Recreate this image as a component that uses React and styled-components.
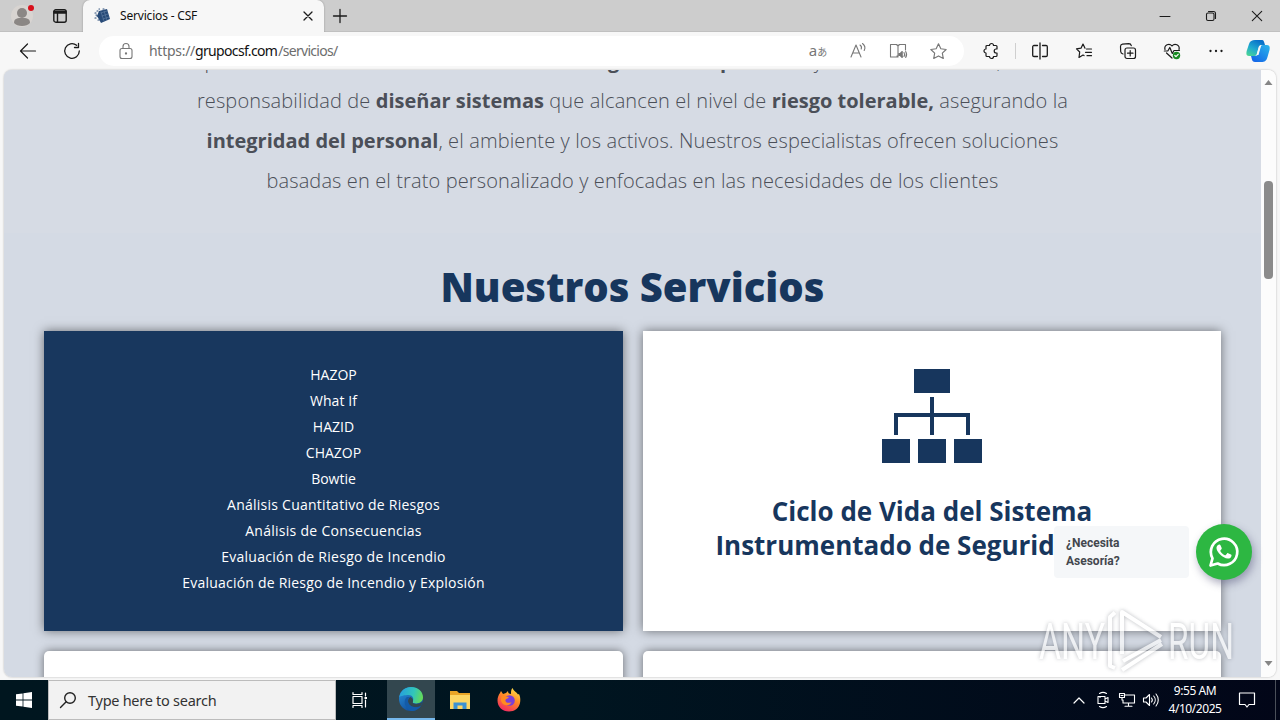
import React from "react";
import styled, { createGlobalStyle } from "styled-components";

const Global = createGlobalStyle`
  * { box-sizing: border-box; }
  body { margin: 0; width: 1280px; height: 720px; overflow: hidden; font-family: "Open Sans", "Noto Sans", sans-serif; }
  p, h1, h2, ul { margin: 0; padding: 0; }
`;

const ui = `"Noto Sans", "Open Sans", sans-serif`;

const Screen = styled.div`
  width: 1280px;
  height: 720px;
  display: flex;
  flex-direction: column;
  background: #f7f7f7;
  position: relative;
  overflow: hidden;
`;

const Icon = styled.svg.attrs({ fill: "none", strokeLinecap: "round", strokeLinejoin: "round" })`
  width: ${(p) => p.$w || 20}px;
  height: ${(p) => p.$h || p.$w || 20}px;
  stroke: ${(p) => p.$c || "#1b1b1b"};
  stroke-width: ${(p) => p.$s || 1.2};
  flex: none;
  display: block;
  overflow: visible;
`;

/* Browser chrome */
const TitleBar = styled.div`
  height: 32px;
  flex: none;
  display: flex;
  background: #cdcdcd;
  border-bottom: 1px solid #c0c0c0;
`;
const Cell = styled.div`
  width: ${(p) => p.$w || 44}px;
  height: 100%;
  flex: none;
  display: flex;
  align-items: center;
  justify-content: center;
`;
const Tab = styled.div`
  width: 241px;
  height: 32px;
  flex: none;
  display: flex;
  align-items: center;
  padding: 0 11px 0 11px;
  background: #f7f7f7;
  border-radius: 7px 7px 0 0;
  box-shadow: 0 0 2px rgba(0, 0, 0, 0.3);
  clip-path: inset(-2px -3px 0 -3px);
`;
const TabTitle = styled.span`
  flex: 1;
  padding-left: 10px;
  font: 12px/16px ${ui};
  letter-spacing: -0.18px;
  color: #111;
`;
const Spacer = styled.div`
  flex: 1;
`;
const ToolBar = styled.div`
  height: 38px;
  flex: none;
  display: flex;
  align-items: center;
  padding-left: 6px;
  background: #f7f7f7;
`;
const Address = styled.div`
  width: 865px;
  height: 30px;
  margin: 0 5px;
  display: flex;
  align-items: center;
  background: #fff;
  border-radius: 15px;
  padding: 0 6px 0 20px;
`;
const Url = styled.span`
  flex: 1;
  padding-left: 16px;
  font: 14px/20px ${ui};
  letter-spacing: -0.28px;
  color: #6d6d6d;
  b { font-weight: 400; color: #111; letter-spacing: -0.66px; }
  span { letter-spacing: -0.7px; padding-left: 1px; }
`;
const Divider = styled.div`
  width: 1px;
  height: 16px;
  margin: 0 2px;
  background: #cfcfcf;
`;
const Translate = styled.span`
  font: 15px/18px "Noto Sans", "Noto Sans CJK JP", sans-serif;
  color: #777;
  display: flex;
  align-items: baseline;
  small { font-size: 10px; line-height: 18px; }
`;

/* Page */
const Viewport = styled.div`
  height: 607px;
  flex: none;
  margin: 0 4px;
  display: flex;
  border-radius: 8px;
  overflow: hidden;
  box-shadow: 0 0 2px rgba(0, 0, 0, 0.3);
`;
const Page = styled.main`
  width: 1257px;
  height: 607px;
  overflow: hidden;
  background: #d4dae4;
`;
const Intro = styled.section`
  height: 163px;
  overflow: hidden;
  background: #d6dbe4;
`;
const IntroText = styled.div`
  margin-top: -29px;
`;
const IntroLine = styled.p`
  height: 40px;
  font-size: 20px;
  line-height: 40px;
  font-weight: 300;
  text-align: center;
  white-space: nowrap;
  color: #4b4f58;
  letter-spacing: 0.12px;
  strong { font-weight: 700; letter-spacing: 0; }
`;
const Heading = styled.h1`
  padding-top: 26px;
  height: 98px;
  text-align: center;
  font-size: 40px;
  line-height: 56px;
  font-weight: 800;
  color: #17365d;
`;
const Cards = styled.section`
  display: grid;
  grid-template-columns: 579px 578px;
  grid-template-rows: 300px 300px;
  gap: 20px;
  padding-left: 40px;
`;
const Card = styled.article`
  display: flex;
  flex-direction: column;
  align-items: center;
  justify-content: ${(p) => (p.$dark ? "center" : "flex-start")};
  background: ${(p) => (p.$dark ? "#18375e" : "#fff")};
  border-radius: ${(p) => p.$r || 0}px;
  box-shadow: 0 0 10px rgba(0, 0, 0, 0.5);
  color: #fff;
`;
const ServiceList = styled.ul`
  list-style: none;
  text-align: center;
  font-size: 14px;
  line-height: 26px;
  padding-bottom: 4px;
`;
const Service = styled.li`
  letter-spacing: ${(p) => p.$ls}px;
`;
const CardTitle = styled.h2`
  margin-top: 31px;
  text-align: center;
  font-size: 26px;
  line-height: 34px;
  font-weight: 700;
  color: #17365d;
`;
const Diagram = styled.svg`
  width: 100px;
  height: 94px;
  margin-top: 38px;
  display: block;
`;
const ScrollBar = styled.div`
  width: 15px;
  display: flex;
  flex-direction: column;
  align-items: center;
  background: #fcfcfc;
  padding: 10px 0 11px;
`;
const Thumb = styled.div`
  width: 9px;
  height: 98px;
  margin-top: 96px;
  border-radius: 4px;
  background: #8b8b8b;
`;

/* Floating chat widget */
const Chat = styled.div`
  position: absolute;
  left: 1054px;
  top: 524px;
  display: flex;
  align-items: center;
  gap: 7px;
`;
const ChatLabel = styled.div`
  width: 135px;
  height: 52px;
  padding: 8px 12px;
  background: #f5f7f9;
  border-radius: 4px;
  color: #43474e;
  font: 700 12px/18px Roboto, sans-serif;
`;
const ChatButton = styled.div`
  width: 56px;
  height: 56px;
  border-radius: 50%;
  display: flex;
  align-items: center;
  justify-content: center;
  background: #2db742;
  box-shadow: 2px 4px 8px rgba(70, 70, 110, 0.45);
`;
const Watermark = styled.svg`
  position: absolute;
  left: 1030px;
  top: 600px;
  width: 220px;
  height: 78px;
  filter: drop-shadow(0 0 2px rgba(70, 75, 85, 0.55));
  opacity: 0.66;
`;

/* Taskbar */
const TaskBar = styled.footer`
  height: 40px;
  margin-top: auto;
  flex: none;
  display: flex;
  background: linear-gradient(90deg, #00161f 0%, #001520 45%, #020618 100%);
`;
const Search = styled.div`
  width: 288px;
  height: 40px;
  display: flex;
  align-items: center;
  gap: 12px;
  padding-left: 11px;
  background: #f2f2f2;
  border: 1px solid #bcbcbc;
  font: 14.5px/20px ${ui};
  letter-spacing: -0.27px;
  color: #333;
`;
const App48 = styled(Cell)`
  width: 48px;
  margin-left: ${(p) => p.$ml || 0}px;
  background: ${(p) => (p.$on ? "#33474f" : "transparent")};
  border-bottom: ${(p) => (p.$on ? "2px solid #76b9ed" : "0")};
`;
const Clock = styled.div`
  width: 64px;
  text-align: center;
  color: #fff;
  font: 12px/18px ${ui};
  letter-spacing: -0.45px;
  padding-top: 2px;
`;
const Edge = styled.div`
  width: 1px;
  height: 40px;
  margin: 0 4px 0 8px;
  background: #4a4f59;
`;

const services = [
  ["HAZOP", 0], ["What If", 0.1], ["HAZID", 0], ["CHAZOP", 0], ["Bowtie", 0],
  ["Análisis Cuantitativo de Riesgos", 0.25],
  ["Análisis de Consecuencias", 0.28],
  ["Evaluación de Riesgo de Incendio", 0.27],
  ["Evaluación de Riesgo de Incendio y Explosión", 0.21],
];

function TitleRow() {
  return (
    <TitleBar>
      <Cell $w={44}>
        <Icon viewBox="0 0 26 26" $w={26} stroke="none">
          <circle cx="13" cy="13" r="11" fill="#d8d4d1" stroke="none" />
          <circle cx="13" cy="10" r="5" fill="#8b8785" stroke="none" />
          <path d="M5 20c0-5 4-5 8-5s8 0 8 5c-3 4-13 4-16 0z" fill="#8b8785" stroke="none" />
          <circle cx="22" cy="5" r="3" fill="#d8101c" stroke="none" />
        </Icon>
      </Cell>
      <Cell $w={32}>
        <Icon viewBox="0 0 14 14" $w={14} $s={1.4}>
          <rect x="0.8" y="0.8" width="12.4" height="12.4" rx="2" />
          <path d="M1 2.5h12M1 4h12M4.5 4v9" />
        </Icon>
      </Cell>
      <Cell $w={7} />
      <Tab>
        <Icon viewBox="0 0 16 16" $w={16}>
          <path d="M5 3l8-2 3 10-9 4-4-7z" fill="#284b78" stroke="none" />
          <path d="M7 5l6-2M8 8l6-2M9 11l6-2M7 4l3 9M10 3l3 9" stroke="#6d88aa" strokeWidth=".5" />
          <path d="M1 5h1M3 8h1M1 10h1M3 3h1M5 1h.5M2 7h.5M9 1h1M4 12h1" stroke="#284b78" strokeWidth="1.2" />
        </Icon>
        <TabTitle>Servicios - CSF</TabTitle>
        <Icon viewBox="0 0 10 10" $w={10} $s={1.3}><path d="M1 1l8 8M9 1L1 9" /></Icon>
      </Tab>
      <Cell $w={32}>
        <Icon viewBox="0 0 14 14" $w={14} $s={1.3}><path d="M7 .5v13M.5 7h13" /></Icon>
      </Cell>
      <Spacer />
      <Cell $w={46}><Icon viewBox="0 0 10 10" $w={10} $s={1}><path d="M0 5.5h10" /></Icon></Cell>
      <Cell $w={46}>
        <Icon viewBox="0 0 10 10" $w={10} $s={1.1}>
          <rect x="0.5" y="2" width="7.5" height="7.5" rx="1.5" />
          <path d="M2.5 .5H7.500a2 2 0 0 1 2 2V7.500" />
        </Icon>
      </Cell>
      <Cell $w={46}><Icon viewBox="0 0 10 10" $w={10} $s={1.1}><path d="M.3.3l9.400 9.400M9.700.3L.3 9.700" /></Icon></Cell>
    </TitleBar>
  );
}

function ToolRow() {
  const g = "#777";
  return (
    <ToolBar>
      <Cell><Icon viewBox="0 0 16 16" $w={16}><path d="M15.500 8H.5M7.500 1L.5 8l7 7" /></Icon></Cell>
      <Cell><Icon viewBox="0 0 16 16" $w={16} $s={1.3}><path d="M15.300 8A7.300 7.300 0 1 1 12.600 2.300M14.500 .5v4h-4" /></Icon></Cell>
      <Address>
        <Icon viewBox="0 0 14 16" $w={14} $h={16} $c={g} $s={1.1}>
          <rect x="1" y="5.500" width="12" height="10" rx="2" />
          <path d="M4 5.500V3.500a3 3 0 0 1 6 0v2" />
          <circle cx="7" cy="10.500" r=".6" fill={g} />
        </Icon>
        <Url>https://<b>grupocsf.com</b><span>/servicios/</span></Url>
        <Cell $w={40}><Translate>a<small>あ</small></Translate></Cell>
        <Cell $w={40}>
          <Icon viewBox="0 0 16 16" $w={16} $c={g} $s={1.1}>
            <path d="M1 14L6 2l5 12M2.800 10h6.400M10 2c1.500 1 1.800 2.500 1.200 4M12.500 .5c2.500 2 3 4.500 1.700 7" />
          </Icon>
        </Cell>
        <Cell $w={40}>
          <Icon viewBox="0 0 18 16" $w={18} $h={16} $c={g} $s={1.1}>
            <path d="M9 2v12M9 14H1.500V1.500H7.500L9 3l1.500-1.500h6V7M9 14l-1-1" />
            <path d="M9.800 10.500h1.400l2-2v6l-2-2H9.800z" fill={g} />
            <path d="M15 9.500c.7 1.200.7 2.800 0 4M16.700 8.500c1.200 2 1.200 4 0 6" />
          </Icon>
        </Cell>
        <Cell $w={40}>
          <Icon viewBox="0 0 16 16" $w={17} $c={g} $s={1.1}>
            <path d="M8 .8l2.200 4.600 5 .7-3.600 3.500.9 5L8 12.200l-4.500 2.400.9-5L.8 6.100l5-.7z" />
          </Icon>
        </Cell>
      </Address>
      <Cell>
        <Icon viewBox="0 0 16 16" $w={16} $s={1.2}>
          <path d="M4 2.500h2.500a2 2 0 0 1 4 0H13a1 1 0 0 1 1 1V6h-.8a2 2 0 0 0 0 4h.8v2.500a1 1 0 0 1-1 1h-2.500a2 2 0 0 1-4 0H4a1 1 0 0 1-1-1V10a2 2 0 0 1 0-4V3.500a1 1 0 0 1 1-1z" />
        </Icon>
      </Cell>
      <Divider />
      <Cell>
        <Icon viewBox="0 0 16 16" $w={16} $s={1.300}>
          <path d="M8 0v16M5.500 2.500H2a1.300 1.300 0 0 0-1.300 1.300v8.400A1.300 1.300 0 0 0 2 13.500h3.500M10.500 2.500H14a1.300 1.300 0 0 1 1.300 1.300v8.400a1.300 1.300 0 0 1-1.300 1.300h-3.500" />
        </Icon>
      </Cell>
      <Cell>
        <Icon viewBox="0 0 16 16" $w={16}>
          <path d="M9 5.200L7 1 5 5.200l-4.500.7L3.700 9 3 14.500l4-2.500 1 .6M10.500 6h5M9.500 9.300h6M11 12.700h4.500" />
        </Icon>
      </Cell>
      <Cell>
        <Icon viewBox="0 0 16 16" $w={16}>
          <rect x="5" y="5" width="10.500" height="10.500" rx="2" />
          <path d="M10.200 7.500v5.500M7.500 10.200H13M3 11C1 10.500.8 9.800.7 8.500L.5 3.500C.5 2 1.200 1.300 2.500 1.100L8.800.6c1.500 0 2.200.8 2.500 2" />
        </Icon>
      </Cell>
      <Cell>
        <Icon viewBox="0 0 16 16" $w={16}>
          <path d="M1 6.500C-.2 2 5.300-.4 8 3c2.700-3.400 8.200-1 7 3.500M2.500 10L8 15M.3 8h3.500l2-3.500 2.500 6L10 7.500h5.500" />
          <circle cx="12.500" cy="12.500" r="3.700" fill="#188a22" stroke="none" />
          <path d="M10.800 12.500l1.200 1.200 2.200-2.400" stroke="#fff" />
        </Icon>
      </Cell>
      <Cell><Icon viewBox="0 0 16 4" $w={16} $h={4} $s={2.3}><path d="M2.500 2h.01M8 2h.01M13.500 2h.01" /></Icon></Cell>
      <Cell $w={40}>
        <Icon viewBox="0 0 24 24" $w={24}>
          <defs>
            <linearGradient id="ca" x1="0" y1="1" x2=".6" y2="0"><stop stopColor="#50db8c" /><stop offset=".5" stopColor="#20aad0" /><stop offset="1" stopColor="#0870c9" /></linearGradient>
            <linearGradient id="cb" x1="1" y1="0" x2=".2" y2="1"><stop stopColor="#2ab6ea" /><stop offset="1" stopColor="#1466e8" /></linearGradient>
          </defs>
          <path d="M9 1h7c2 0 2 2 3 5h-4c-2 0-2 2-3 5l-1 4c-1 2-2 2-4 2H3c-3 0-3-3-2-6l2-6c1-3 3-4 6-4z" fill="url(#ca)" stroke="none" />
          <path d="M17 6h4c3 0 3 3 2.500 5l-2 7c-1 4-3 5-6 5H9c-3 0-3-3-4-6h4c2 0 3-1 3.500-3l1.500-5c.6-2 1.500-3 3-3z" fill="url(#cb)" stroke="none" />
          <path d="M10.500 16l2.500-9h2l-2.500 9z" fill="#f7f7f7" stroke="none" />
        </Icon>
      </Cell>
    </ToolBar>
  );
}

function Content() {
  return (
    <Viewport>
      <Page>
        <Intro>
          <IntroText>
            <IntroLine>pioneros en servicios de consultoría en la <strong>seguridad de procesos</strong> y sistema de control, con la</IntroLine>
            <IntroLine>responsabilidad de <strong>diseñar sistemas</strong> que alcancen el nivel de <strong>riesgo tolerable,</strong> asegurando la</IntroLine>
            <IntroLine><strong>integridad del personal</strong>, el ambiente y los activos. Nuestros especialistas ofrecen soluciones</IntroLine>
            <IntroLine>basadas en el trato personalizado y enfocadas en las necesidades de los clientes</IntroLine>
          </IntroText>
        </Intro>
        <Heading>Nuestros Servicios</Heading>
        <Cards>
          <Card $dark>
            <ServiceList>{services.map(([name, ls]) => <Service key={name} $ls={ls}>{name}</Service>)}</ServiceList>
          </Card>
          <Card>
            <Diagram viewBox="0 0 100 94" fill="#17365d">
              <path d="M32 0h36v24H32zM0 70h28v24H0zM36 70h28v24H36zM72 70h28v24H72zM48 28h4v16h36v22h-4V48H52v18h-4V48H16v18h-4V44h36z" />
            </Diagram>
            <CardTitle>Ciclo de Vida del Sistema<br />Instrumentado de Seguridad (SIS)</CardTitle>
          </Card>
          <Card $r={5} />
          <Card $r={5} />
        </Cards>
      </Page>
      <ScrollBar>
        <Icon viewBox="0 0 8 5" $w={9} $h={5}><path d="M4 0l4 5H0z" fill="#868686" stroke="none" /></Icon>
        <Thumb />
        <Spacer />
        <Icon viewBox="0 0 8 5" $w={9} $h={5}><path d="M4 5l4-5H0z" fill="#868686" stroke="none" /></Icon>
      </ScrollBar>
    </Viewport>
  );
}

function Widgets() {
  return (
    <>
      <Chat>
        <ChatLabel>¿Necesita<br />Asesoría?</ChatLabel>
        <ChatButton>
          <Icon viewBox="0 0 32 32" $w={32} $c="#fff" $s={2.700}>
            <path d="M2.500 29.500l2-7.200A13.200 13.200 0 1 1 9.700 27.500z" />
            <path d="M11.200 8.500c.6-.1 1 0 1.300.7l1.200 2.800c.1.500 0 .8-.3 1.200l-1 1.200c-.3.4-.2.600 0 .9 1 1.700 2.500 3 4.400 3.900.4.2.7.2 1-.2l1.300-1.600c.3-.4.600-.4 1-.2l2.900 1.400c.5.3.6.5.5 1.100-.3 2-2 3-3.800 2.900-4.900-.5-10.800-6-11.200-10.300-.1-1.500.8-3.600 2.700-3.800z" fill="#fff" stroke="none" />
          </Icon>
        </ChatButton>
      </Chat>
      <Watermark viewBox="0 0 220 78" fill="#fff">
        <text x="9" y="59" fontFamily="Roboto, sans-serif" fontWeight="400" fontSize="50" textLength="66" lengthAdjust="spacingAndGlyphs">ANY</text>
        <text x="138" y="59" fontFamily="Roboto, sans-serif" fontWeight="400" fontSize="50" textLength="66" lengthAdjust="spacingAndGlyphs">RUN</text>
        <g fill="none" stroke="#fff" strokeWidth="4" strokeLinejoin="round">
          <path d="M85 12.500L80 17v49l5 2M92 54V12l39 25M93 61l38-21M92 70l40-26" />
        </g>
      </Watermark>
    </>
  );
}

function Tasks() {
  return (
    <TaskBar>
      <Cell $w={48}>
        <Icon viewBox="0 0 16 16" $w={16}>
          <path d="M0 2.300l6.600-.9v6.200H0zM7.400 1.200L16 0v7.600H7.400zM0 8.400h6.600v6.200L0 13.700zM7.400 8.400H16V16l-8.600-1.200z" fill="#fff" stroke="none" />
        </Icon>
      </Cell>
      <Search>
        <Icon viewBox="0 0 16 16" $w={16} $s={1.400} $c="#222"><circle cx="10" cy="6" r="5.300" /><path d="M6.200 9.800L.5 15.500" /></Icon>
        <span>Type here to search</span>
      </Search>
      <App48>
        <Icon viewBox="0 0 16 16" $w={16} $c="#fff">
          <path d="M1 .5v2h9v-2M1 15.500v-2h9v2M1 4.500h9v7H1zM13.500 1v3M13.500 8v7" />
          <rect x="12.500" y="5" width="2.500" height="2" fill="#fff" stroke="none" />
        </Icon>
      </App48>
      <App48 $ml={3} $on>
        <Icon viewBox="0 0 24 24" $w={24}>
          <defs>
            <linearGradient id="ea" x1="0" y1=".3" x2="1" y2=".5"><stop stopColor="#259fe0" /><stop offset=".6" stopColor="#32c6b9" /><stop offset="1" stopColor="#66db55" /></linearGradient>
            <linearGradient id="eb" x1="0" y1="0" x2=".6" y2="1"><stop stopColor="#2a95df" /><stop offset="1" stopColor="#104c9a" /></linearGradient>
          </defs>
          <circle cx="12" cy="12" r="12" fill="url(#eb)" stroke="none" />
          <path d="M.2 10C1.500 3.500 6.500 0 12 0c7 0 12 4.800 12 10.300 0 4-3 6.200-6.500 6.200-3 0-4.500-1-4-2 2-3 0-6.500-4-6.500C5.500 8 1.500 9 .2 10z" fill="url(#ea)" stroke="none" />
          <path d="M14 14.500c-1 1 .5 2.500 3.500 2.500 2.500 0 4-.7 6-2l-1.500 3.500c-5 3-13 1.500-13-4.500 0-2 1-3.500 2.500-4 2 1 3 3 2.500 4.500z" fill="#33474f" stroke="none" />
          <path d="M8 10c-4 3-3 11 4 14 4 .3 8-2 10-5-6 3-13 0-13-5 0-2 1-3.500 2-4z" fill="#135ba8" stroke="none" />
        </Icon>
      </App48>
      <App48 $ml={1}>
        <Icon viewBox="0 0 22 20" $w={22} $h={20}>
          <path d="M1 1h7l2 2h11v16H1z" fill="#e9a526" stroke="none" />
          <path d="M1 5h20v14H1z" fill="#fcd663" stroke="none" />
          <path d="M4.500 19v-6.500h13V19h-4v-3.500h-5V19z" fill="#3b91d1" stroke="none" />
        </Icon>
      </App48>
      <App48 $ml={1}>
        <Icon viewBox="0 0 24 24" $w={24}>
          <defs>
            <linearGradient id="ff" x1=".8" y1="0" x2=".3" y2="1"><stop stopColor="#ffe44a" /><stop offset=".45" stopColor="#ff8a26" /><stop offset="1" stopColor="#f22862" /></linearGradient>
          </defs>
          <path d="M3 5l1-2 2 3 3-1 2-2c0 2 1 3 3 3 0-3 0-4 1.500-6 1 3 4 4 5.500 6.500l1-.5c1.500 3 1.500 6 1 9-1 5-5.500 8.500-11 8.500C5.500 23.500.5 19 .5 12.500c0-3 1-5.500 2.500-7.500z" fill="url(#ff)" stroke="none" />
          <circle cx="12.500" cy="12.500" r="5.300" fill="#7b3fd8" stroke="none" />
          <path d="M5 8c3-1 4 1 7 1-1 2-4 1.500-3.500 4 .5 2 4 2.500 6 1-1 4-8 4.500-10 0-1-2-.5-4 .5-6z" fill="#ff8b20" stroke="none" />
        </Icon>
      </App48>
      <Spacer />
      <Cell $w={24}><Icon viewBox="0 0 12 7" $w={12} $h={7} $c="#fff"><path d="M1 6l5-5 5 5" /></Icon></Cell>
      <Cell $w={24}>
        <Icon viewBox="0 0 12 16" $w={12} $h={16} $c="#fff" $s={1.100}>
          <path d="M2.500 1.500c2-1.300 5-1.300 7 0M2.500 14.500c2 1.300 5 1.300 7 0M1 4.500h7v7H1zM8 7l3-1.500v5L8 9M3 4.500v1" />
        </Icon>
      </Cell>
      <Cell $w={24}>
        <Icon viewBox="0 0 16 14" $w={16} $h={14} $c="#fff" $s={1.100}>
          <path d="M6 2h9.500v8H4V7M9.500 10v3M6 13.300h7M.5.500h5v4h-5zM3 4.500V7M2 2.500h2" />
        </Icon>
      </Cell>
      <Cell $w={24}>
        <Icon viewBox="0 0 16 14" $w={16} $h={14} $c="#fff" $s={1.100}>
          <path d="M.5 5v4H3l3.500 3.500v-11L3 5zM8.500 5c1 1.200 1 2.800 0 4M10.700 3c2 2.300 2 5.700 0 8M13 1c3 3.500 3 8.500 0 12" />
        </Icon>
      </Cell>
      <Clock>9:55 AM<br />4/10/2025</Clock>
      <Cell $w={40}>
        <Icon viewBox="0 0 16 16" $w={16} $c="#fff"><path d="M.5 1h15v11.500H10L8 15l-2-2.500H.5z" /></Icon>
      </Cell>
      <Edge />
    </TaskBar>
  );
}

export default function App() {
  return (
    <Screen>
      <Global />
      <TitleRow />
      <ToolRow />
      <Content />
      <Widgets />
      <Tasks />
    </Screen>
  );
}
